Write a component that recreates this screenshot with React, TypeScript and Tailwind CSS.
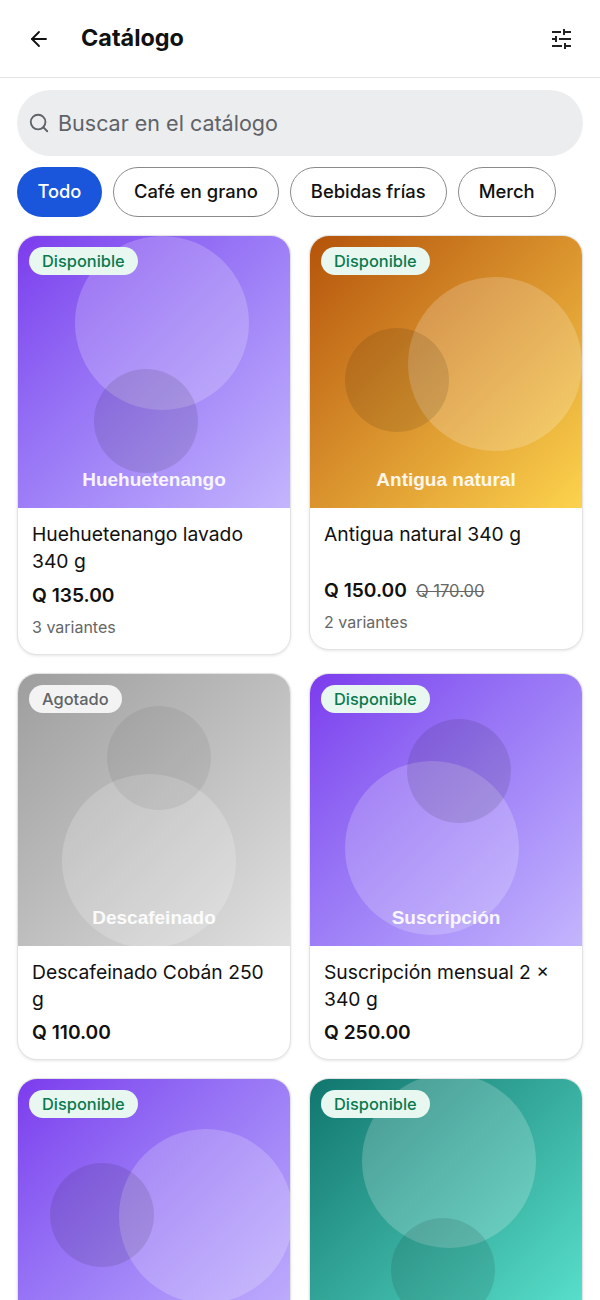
import { ArrowLeft, Search } from "lucide-react";

type Product = {
  art: string;
  title: string;
  price: string;
  oldPrice?: string;
  variants?: string;
  status: string;
  bg: string;
  circles: string[];
};

const products: Product[] = [
  {
    art: "Huehuetenango",
    title: "Huehuetenango lavado 340 g",
    price: "Q 135.00",
    variants: "3 variantes",
    status: "Disponible",
    bg: "bg-gradient-to-br from-[#7c3aed] to-[#c4b5fd]",
    circles: [
      "left-[57px] top-0 w-[174px] h-[174px] bg-white/20",
      "left-[76px] top-[133px] w-[104px] h-[104px] bg-black/10",
    ],
  },
  {
    art: "Antigua natural",
    title: "Antigua natural 340 g",
    price: "Q 150.00",
    oldPrice: "Q 170.00",
    variants: "2 variantes",
    status: "Disponible",
    bg: "bg-gradient-to-br from-[#b45309] to-[#fcd34d]",
    circles: [
      "left-[98px] top-[41px] w-[174px] h-[174px] bg-white/20",
      "left-[35px] top-[92px] w-[104px] h-[104px] bg-black/10",
    ],
  },
  {
    art: "Descafeinado",
    title: "Descafeinado Cobán 250 g",
    price: "Q 110.00",
    status: "Agotado",
    bg: "bg-gradient-to-br from-[#9e9e9e] to-[#e0e0e0]",
    circles: [
      "left-[44px] top-[100px] w-[174px] h-[174px] bg-white/20",
      "left-[89px] top-[32px] w-[104px] h-[104px] bg-black/[0.06]",
    ],
  },
  {
    art: "Suscripción",
    title: "Suscripción mensual 2 × 340 g",
    price: "Q 250.00",
    status: "Disponible",
    bg: "bg-gradient-to-br from-[#7c3aed] to-[#c4b5fd]",
    circles: [
      "left-[35px] top-[87px] w-[174px] h-[174px] bg-white/20",
      "left-[97px] top-[45px] w-[104px] h-[104px] bg-black/10",
    ],
  },
  {
    art: "",
    title: "",
    price: "",
    status: "Disponible",
    bg: "bg-gradient-to-br from-[#7c3aed] to-[#c4b5fd]",
    circles: [
      "left-[101px] top-[50px] w-[174px] h-[174px] bg-white/20",
      "left-[32px] top-[84px] w-[104px] h-[104px] bg-black/10",
    ],
  },
  {
    art: "",
    title: "",
    price: "",
    status: "Disponible",
    bg: "bg-gradient-to-br from-[#0f766e] to-[#5eead4]",
    circles: [
      "left-[52px] top-[-5px] w-[174px] h-[174px] bg-white/20",
      "left-[81px] top-[139px] w-[104px] h-[104px] bg-black/10",
    ],
  },
];

const chips = ["Café en grano", "Bebidas frías", "Merch"];

function TuneIcon() {
  return (
    <svg width="22" height="22" viewBox="0 0 22 22" fill="none" stroke="#222" strokeWidth="2">
      <path d="M2 4h9M14 1v6M14 4h7" />
      <path d="M2 11h4M6 8v6M9 11h12" />
      <path d="M2 18h10M15 15v6M15 18h6" />
    </svg>
  );
}

function ProductCard({ p }: { p: Product }) {
  return (
    <div className="self-start overflow-hidden rounded-[20px] border border-[#e3e3e5] bg-white shadow-[0_1px_3px_rgba(0,0,0,0.1)]">
      <div className={`relative h-[272px] overflow-hidden ${p.bg}`}>
        {p.circles.map((c, i) => (
          <div key={i} className={`absolute rounded-full ${c}`} />
        ))}
        <span
          className={`absolute left-[11px] top-[11px] rounded-[14px] px-[13px] py-[3px] text-[16.4px] font-medium leading-[22px] ${
            p.status === "Agotado" ? "bg-[#f3f3f3] text-[#5f6368]" : "bg-[#e8f8f1] text-[#0a7a4f]"
          }`}
        >
          {p.status}
        </span>
        <span className="absolute inset-x-0 bottom-[16px] text-center font-['Liberation_Sans',sans-serif] text-[19px] font-bold leading-[24px] text-white/90">
          {p.art}
        </span>
      </div>
      {p.title && (
        <div className={`px-[14px] pt-[13px] ${p.variants ? "pb-[15px]" : "pb-[13px]"}`}>
          <h3 className="min-h-[49px] text-[19.3px] leading-[27px] text-[#111]">{p.title}</h3>
          <div className={`flex items-baseline gap-[9px] ${p.variants ? "mt-[6px]" : "mt-[5px]"}`}>
            <span className="text-[19.2px] font-semibold leading-[28px] text-[#111]">{p.price}</span>
            {p.oldPrice && <span className="text-[16.6px] text-[#666] line-through">{p.oldPrice}</span>}
          </div>
          {p.variants && <p className="mt-[6px] text-[16px] leading-[24px] text-[#666]">{p.variants}</p>}
        </div>
      )}
    </div>
  );
}

export default function App() {
  return (
    <div className="h-[1300px] overflow-hidden bg-white font-['Inter',sans-serif]">
      <header className="flex h-[78px] items-center border-b border-[#e2e2e4] pl-[27px] pr-[28px]">
        <ArrowLeft size={24} strokeWidth={1.8} className="text-[#111]" />
        <h1 className="ml-[30px] flex-1 pb-[2px] text-[23.4px] font-bold text-[#111]">Catálogo</h1>
        <TuneIcon />
      </header>

      <div className="px-[17px] pt-[12px]">
        <div className="flex h-[66px] items-center rounded-[33px] bg-[#ecedef] pl-[11px]">
          <Search size={22} className="text-[#5f6368]" />
          <span className="ml-[8px] text-[21.5px] text-[#5f6368]">Buscar en el catálogo</span>
        </div>

        <div className="mt-[11px] flex gap-[11px]">
          <span className="flex h-[50px] items-center rounded-[25px] bg-[#1a56db] px-[20.5px] text-[18.3px] font-medium text-white">Todo</span>
          {chips.map((c) => (
            <span key={c} className="flex h-[50px] items-center rounded-[25px] border border-[#8a8a8a] px-[20px] text-[18.4px] font-medium text-[#111]">
              {c}
            </span>
          ))}
        </div>

        <div className="mt-[18px] grid grid-cols-2 gap-x-[18px] gap-y-[18px]">
          {products.map((p, i) => (
            <ProductCard key={i} p={p} />
          ))}
        </div>
      </div>
    </div>
  );
}
